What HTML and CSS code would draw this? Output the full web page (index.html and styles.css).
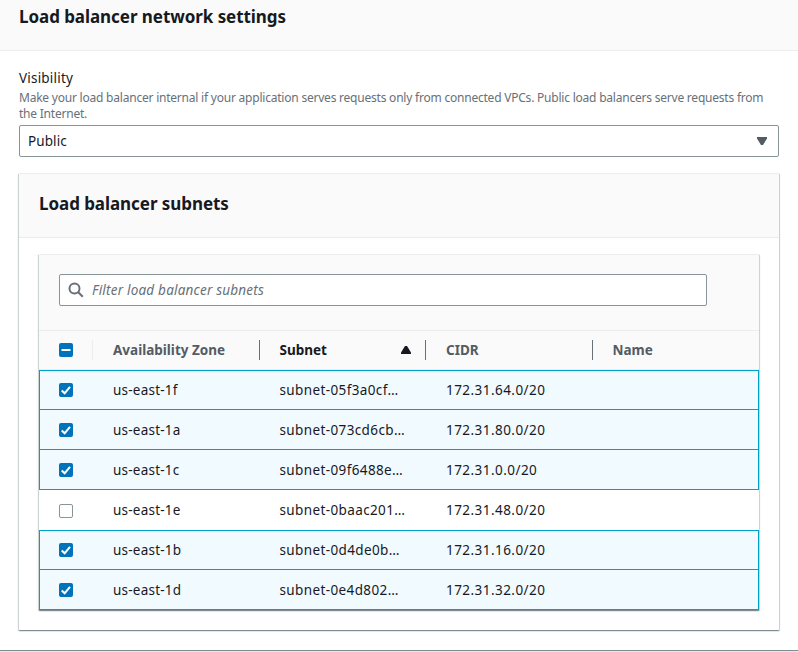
FILE: index.html
```
<!DOCTYPE html>
<html lang="en">
<head>
<meta charset="utf-8">
<title>Load balancer network settings</title>
<link rel="stylesheet" href="styles.css">
</head>
<body>
<svg class="defs" aria-hidden="true">
  <symbol id="check" viewBox="0 0 14 14"><rect width="14" height="14" rx="2" fill="#0073bb"/><path d="M2.7 7.4 5.7 10.2 11 3.8" fill="none" stroke="#fff" stroke-width="2"/></symbol>
  <symbol id="some" viewBox="0 0 14 14"><rect width="14" height="14" rx="2" fill="#0073bb"/><path d="M2.5 7h9" stroke="#fff" stroke-width="2"/></symbol>
  <symbol id="none" viewBox="0 0 14 14"><rect x=".5" y=".5" width="13" height="13" rx="1.5" fill="#fff" stroke="#879596"/></symbol>
</svg>
<main class="container page">
  <header class="page-header"><h2>Load balancer network settings</h2></header>
  <div class="content">
    <label class="label">Visibility</label>
    <p class="hint">Make your load balancer internal if your application serves requests only from connected VPCs. Public load balancers serve requests from<br>the Internet.</p>
    <div class="select"><span>Public</span><svg width="10" height="8"><path d="M0 0h10v1.5L6 8H4L0 1.5z" fill="#545b64"/></svg></div>
    <section class="container panel">
      <header class="panel-header"><h3>Load balancer subnets</h3></header>
      <div class="container table">
        <div class="filter"><div class="search"><svg width="16" height="16" viewBox="0 0 16 16" fill="none" stroke="#687078" stroke-width="2"><circle cx="6.5" cy="6.5" r="5"/><path d="m10 10 4.8 4.8"/></svg><span>Filter load balancer subnets</span></div></div>
        <div class="row head">
          <div class="cell pick"><svg class="box"><use href="#some"/></svg></div>
          <div class="cell"><b>Availability Zone</b></div>
          <div class="cell sorted"><b>Subnet</b><svg width="10" height="8"><path d="M4 0h2l4 6.5V8H0V6.5z" fill="#16191f"/></svg></div>
          <div class="cell"><b>CIDR</b></div>
          <div class="cell"><b>Name</b></div>
        </div>
        <div class="row selected first"><div class="cell pick"><svg class="box"><use href="#check"/></svg></div><div class="cell zone">us-east-1f</div><div class="cell subnet">subnet-05f3a0cf…</div><div class="cell cidr">172.31.64.0/20</div><div class="cell"></div></div>
        <div class="row selected"><div class="cell pick"><svg class="box"><use href="#check"/></svg></div><div class="cell zone">us-east-1a</div><div class="cell subnet">subnet-073cd6cb…</div><div class="cell cidr">172.31.80.0/20</div><div class="cell"></div></div>
        <div class="row selected"><div class="cell pick"><svg class="box"><use href="#check"/></svg></div><div class="cell zone">us-east-1c</div><div class="cell subnet">subnet-09f6488e…</div><div class="cell cidr">172.31.0.0/20</div><div class="cell"></div></div>
        <div class="row clear"><div class="cell pick"><svg class="box"><use href="#none"/></svg></div><div class="cell zone">us-east-1e</div><div class="cell subnet">subnet-0baac201…</div><div class="cell cidr">172.31.48.0/20</div><div class="cell"></div></div>
        <div class="row selected first"><div class="cell pick"><svg class="box"><use href="#check"/></svg></div><div class="cell zone">us-east-1b</div><div class="cell subnet">subnet-0d4de0b…</div><div class="cell cidr">172.31.16.0/20</div><div class="cell"></div></div>
        <div class="row selected"><div class="cell pick"><svg class="box"><use href="#check"/></svg></div><div class="cell zone">us-east-1d</div><div class="cell subnet">subnet-0e4d802…</div><div class="cell cidr">172.31.32.0/20</div><div class="cell"></div></div>
      </div>
    </section>
  </div>
</main>
</body>
</html>
```

FILE: styles.css
```
* { box-sizing: border-box; }
body {
  margin: 0;
  height: 652px;
  overflow: hidden;
  background: #fff;
  color: #16191f;
  font: 13.5px/20px "Noto Sans", sans-serif;
}
h2, h3, p { margin: 0; }
.defs { display: none; }
.container {
  background: #fff;
  box-shadow: 0 1px 1px 0 rgba(0, 28, 36, .3), 1px 1px 1px 0 rgba(0, 28, 36, .15), -1px 1px 1px 0 rgba(0, 28, 36, .15);
}
.page { height: 650px; margin: 0 -2px; padding: 0 2px; }
.page-header {
  height: 51px;
  padding: 6px 21px;
  margin: 0 -2px;
  background: #fafafa;
  border-bottom: 1px solid #eaeded;
}
h2, h3 { font-size: 17px; line-height: 22px; font-weight: 700; letter-spacing: -.06px; }
.content { padding: 17px 19px 0; }
.label { display: block; height: 22px; line-height: 20px; letter-spacing: .2px; }
.hint { height: 35px; font-size: 12px; line-height: 16px; letter-spacing: -.217px; color: #687078; white-space: nowrap; }
.select {
  display: flex;
  align-items: center;
  justify-content: space-between;
  height: 32px;
  padding: 0 11px 0 8px;
  border: 1px solid #879596;
  border-radius: 2px;
  letter-spacing: .1px;
}
.panel { height: 457px; margin-top: 16px; border-top: 1px solid #eaeded; }
.panel-header {
  height: 64px;
  padding: 19px 20px;
  background: #fafafa;
  border-bottom: 1px solid #eaeded;
}
.table { width: 720px; margin: 16px 20px 0; border-top: 1px solid #eaeded; }
.filter { height: 75px; padding: 19px 20px; background: #fafafa; }
.search {
  display: flex;
  align-items: center;
  gap: 8px;
  width: 648px;
  height: 32px;
  padding-left: 8px;
  background: #fff;
  border: 1px solid #879596;
  border-radius: 2px;
  color: #687078;
  font-style: italic;
  letter-spacing: .21px;
}
.row {
  display: grid;
  grid-template-columns: 54px 166.5px 166.5px 166.5px 1fr;
  align-items: center;
  height: 40px;
}
.cell { padding-left: 20px; white-space: nowrap; height: 20px; line-height: 20px; }
.box { display: block; width: 14px; height: 14px; margin-top: 3px; }
.clear .box { margin-top: 4px; }
.head {
  background: #fafafa;
  color: #545b64;
  border-top: 1px solid #eaeded;
  border-bottom: 1px solid #eaeded;
}
.head .cell { border-right: 1px solid #687078; }
.head .pick { border-color: #eaeded; }
.head .cell:last-child { border: 0; }
.sorted { display: flex; align-items: center; justify-content: space-between; padding-right: 14px; color: #16191f; }
.zone { letter-spacing: .23px; }
.subnet { letter-spacing: .38px; }
.cidr { letter-spacing: .45px; }
.selected {
  grid-template-columns: 53px 166.5px 166.5px 166.5px 1fr;
  background: #f1faff;
  border: 1px solid #00a1c9;
  border-top: 0;
  padding-top: 1px;
}
.selected .pick { padding-left: 19px; }
.selected.first { border-top: 1px solid #00a1c9; padding-top: 0; }
```
